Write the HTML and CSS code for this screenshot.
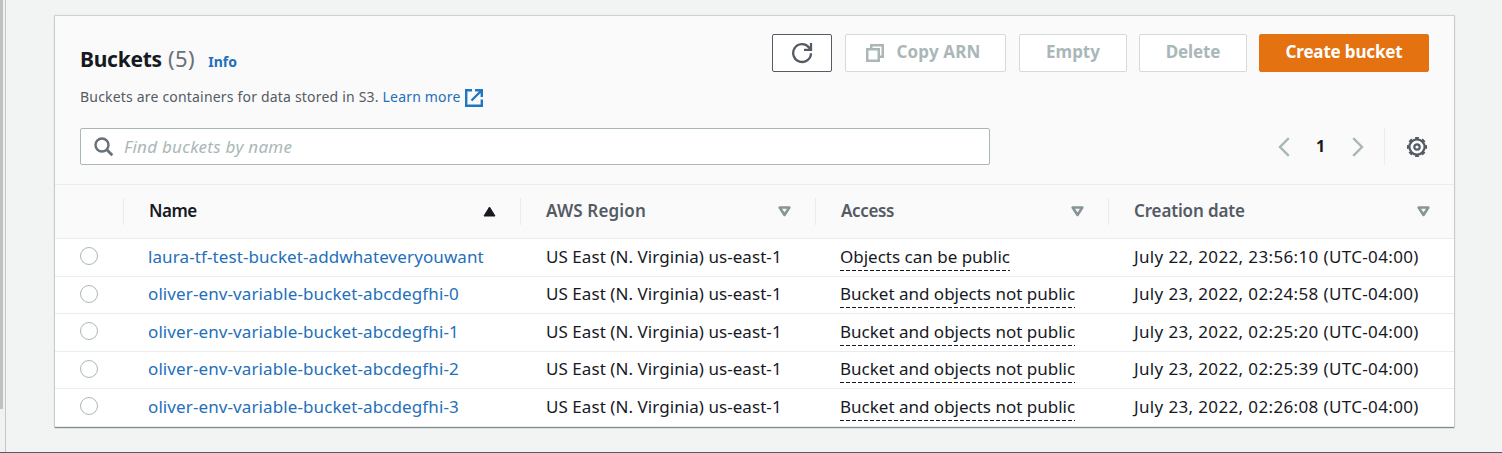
FILE: index.html
```html
<!DOCTYPE html>
<html lang="en">
<head>
<meta charset="utf-8">
<title>S3 Buckets</title>
<link rel="stylesheet" href="styles.css">
</head>
<body>
<div class="app">
  <div class="scrollbar"><div class="thumb"></div></div>
  <main class="content">
    <section class="panel">
      <header class="panel-head">
        <div class="title-row">
          <div class="heading">
            <h1><span class="title">Buckets</span><span class="count">(5)</span><a class="info">Info</a></h1>
            <p class="desc">Buckets are containers for data stored in S3. <a class="link">Learn more</a><svg class="ext" width="18" height="18" viewBox="0 0 18 18"><path d="M7 1.200H1.200v15.600h15.600V10.500M10 1.200h6.800V8M16.500 1.500L6.500 11.500" fill="none" stroke="currentColor" stroke-width="2.400"/></svg></p>
          </div>
          <div class="actions">
            <button class="btn refresh"><svg width="22" height="22" viewBox="0 0 22 22"><path d="M20 11.200A8.900 8.900 0 1 1 17.800 5.200L19.500 7.200M20 1v6.900h-7" fill="none" stroke="currentColor" stroke-width="2.300"/></svg></button>
            <button class="btn off copy"><svg width="18" height="18" viewBox="0 0 18 18"><path d="M1.250 5.250h11.500v11.500H1.250zM5.250 5V1.250h11.500v11.500H13" fill="none" stroke="currentColor" stroke-width="2.500"/></svg><span>Copy ARN</span></button>
            <button class="btn off empty">Empty</button>
            <button class="btn off delete">Delete</button>
            <button class="btn primary">Create bucket</button>
          </div>
        </div>
        <div class="filter-row">
          <div class="search">
            <svg width="20" height="20" viewBox="0 0 20 20"><path d="M12.600 12.600l5.700 5.700" fill="none" stroke="currentColor" stroke-width="2.800"/><circle cx="8" cy="8" r="6.500" fill="none" stroke="currentColor" stroke-width="2.400"/></svg>
            <span>Find buckets by name</span>
          </div>
          <div class="pager">
            <svg class="arrow" width="12" height="20" viewBox="0 0 12 20"><path d="M10.800 1.200L2 10l8.800 8.800" fill="none" stroke="currentColor" stroke-width="2.400"/></svg>
            <b class="page">1</b>
            <svg class="arrow" width="12" height="20" viewBox="0 0 12 20"><path d="M1.200 1.200L10 10l-8.800 8.800" fill="none" stroke="currentColor" stroke-width="2.400"/></svg>
            <span class="divider"></span>
            <svg class="gear" width="22" height="22" viewBox="0 0 22 22" fill="none" stroke="currentColor"><circle cx="11" cy="11" r="7.600" stroke-width="2.200"/><circle cx="11" cy="11" r="9" stroke-width="2.200" pathLength="80" stroke-dasharray="5.200 4.800" stroke-dashoffset="2.600"/><circle cx="11" cy="11" r="2.700" stroke-width="2.200"/></svg>
          </div>
        </div>
      </header>
      <div class="row thead">
        <div class="th"></div>
        <div class="th sorted"><span class="h-name">Name</span><svg class="sort" width="13" height="11" viewBox="0 0 13 11"><path d="M6.500 1L12 10H1z" fill="currentColor" stroke="currentColor" stroke-linejoin="round"/></svg></div>
        <div class="th"><span class="h-region">AWS Region</span><svg class="sort" width="13" height="11" viewBox="0 0 13 11"><path d="M1.700 1.500h9.600L6.500 9z" fill="none" stroke="currentColor" stroke-width="2.600" stroke-linejoin="round"/></svg></div>
        <div class="th"><span class="h-access">Access</span><svg class="sort" width="13" height="11" viewBox="0 0 13 11"><path d="M1.700 1.500h9.600L6.500 9z" fill="none" stroke="currentColor" stroke-width="2.600" stroke-linejoin="round"/></svg></div>
        <div class="th"><span class="h-date">Creation date</span><svg class="sort" width="13" height="11" viewBox="0 0 13 11"><path d="M1.700 1.500h9.600L6.500 9z" fill="none" stroke="currentColor" stroke-width="2.600" stroke-linejoin="round"/></svg></div>
      </div>
      <div class="row"><i class="radio"></i><a class="name">laura-tf-test-bucket-addwhateveryouwant</a><span class="region">US East (N. Virginia) us-east-1</span><span class="access"><u>Objects can be public</u></span><span class="date">July 22, 2022, 23:56:10 (UTC-04:00)</span></div>
      <div class="row short"><i class="radio"></i><a class="name">oliver-env-variable-bucket-abcdegfhi-0</a><span class="region">US East (N. Virginia) us-east-1</span><span class="access"><u>Bucket and objects not public</u></span><span class="date">July 23, 2022, 02:24:58 (UTC-04:00)</span></div>
      <div class="row"><i class="radio"></i><a class="name">oliver-env-variable-bucket-abcdegfhi-1</a><span class="region">US East (N. Virginia) us-east-1</span><span class="access"><u>Bucket and objects not public</u></span><span class="date">July 23, 2022, 02:25:20 (UTC-04:00)</span></div>
      <div class="row short"><i class="radio"></i><a class="name">oliver-env-variable-bucket-abcdegfhi-2</a><span class="region">US East (N. Virginia) us-east-1</span><span class="access"><u>Bucket and objects not public</u></span><span class="date">July 23, 2022, 02:25:39 (UTC-04:00)</span></div>
      <div class="row"><i class="radio"></i><a class="name">oliver-env-variable-bucket-abcdegfhi-3</a><span class="region">US East (N. Virginia) us-east-1</span><span class="access"><u>Bucket and objects not public</u></span><span class="date">July 23, 2022, 02:26:08 (UTC-04:00)</span></div>
    </section>
  </main>
</div>
</body>
</html>
```
FILE: styles.css
```css
* { box-sizing: border-box; }
body { margin: 0; background: #f2f3f3; color: #16191f; font: 17px/24px "Noto Sans", sans-serif; overflow: hidden; white-space: nowrap; }
svg { display: block; flex: none; }
.app { display: flex; height: 453px; border-bottom: 1px solid #545b64; }
.scrollbar { width: 6px; background: #f1f1f1; border-right: 1px solid #c4c8c8; }
.thumb { width: 3px; height: 409px; background: #c1c1c1; }
.content { flex: 1; padding: 16px 48px 0 49px; }
.panel { width: 1399px; height: 411px; background: #fff; box-shadow: 0 1px 1px 0 rgba(0,28,36,.4), 0 0 1px 1px rgba(0,28,36,.12), 0 -1px 0 0 #eaeded; }
.panel-head { height: 169px; padding: 18px 25px 0; background: #fafafa; border-bottom: 1px solid #eaeded; }
.title-row { display: flex; justify-content: space-between; height: 94px; }
.heading { padding-top: 10px; }
h1 { display: flex; align-items: baseline; margin: 0; line-height: 28px; font-size: 21px; }
.title { letter-spacing: -.25px; }
.count { margin-left: 6px; font-size: 22px; font-weight: 400; color: #687078; letter-spacing: .5px; }
.info { margin-left: 13px; font-size: 14px; color: #236fb9; }
.desc { display: flex; align-items: center; margin: 10px 0 0; font-size: 14px; line-height: 22px; letter-spacing: .19px; color: #545b64; white-space: pre; }
.link, .name { color: #236fb9; }
.ext { margin: 1px 0 0 4px; color: #1f76c2; }
.actions { display: flex; height: 38px; }
.btn { display: flex; align-items: center; justify-content: center; height: 38px; padding: 0 0 2px; font: 700 17px/22px "Noto Sans", sans-serif; border: 1px solid #545b64; border-radius: 2px; background: #fff; color: #545b64; }
.refresh { width: 60px; margin-right: 13px; padding: 0; }
.off { border-color: #d5dbdb; color: #aab7b8; }
.copy { width: 161px; margin-right: 13px; padding-right: 4px; gap: 12px; letter-spacing: .15px; }
.copy svg { margin-top: 2px; }
.empty { width: 108px; margin-right: 12px; }
.delete { width: 108px; margin-right: 12px; letter-spacing: -.1px; }
.primary { width: 170px; border-color: #e47211; background: #e47211; color: #fff; letter-spacing: -.17px; }
.filter-row { display: flex; justify-content: space-between; height: 37px; }
.search { display: flex; align-items: center; width: 910px; padding-left: 13px; background: #fff; border: 1px solid #aab7b8; border-radius: 2px; color: #687078; }
.search span { margin-left: 10px; font-style: italic; letter-spacing: .28px; color: #aab7b8; }
.pager { display: flex; align-items: center; color: #545b64; }
.arrow { color: #aab7b8; }
.page { width: 62px; padding: 0 1px 2px 0; text-align: center; font-size: 16px; color: #16191f; }
.divider { width: 1px; height: 37px; margin: 0 21px 0 20px; background: #eaeded; }
.gear { margin-right: 1px; }
.row { display: grid; grid-template-columns: 69px 397px 295px 293px 345px; align-items: center; height: 38px; border-bottom: 1px solid #eaeded; }
.short { height: 37px; }
.row > .name, .row > .region, .row > .access, .row > .date { padding-left: 24px; padding-bottom: 2px; }
.row > .region, .row > .date { padding-left: 25px; }
.thead { height: 54px; background: #fafafa; color: #545b64; font-weight: 600; }
.th { display: flex; align-items: center; justify-content: space-between; height: 27px; padding: 0 24px 0 25px; border-right: 1px solid #eaeded; }
.th:last-child { border-right: 0; }
.th span { padding-bottom: 2px; }
.sorted { color: #16191f; }
.sort { color: #879596; }
.sorted .sort { color: #16191f; }
.h-name { letter-spacing: -.5px; }
.h-region { letter-spacing: .15px; }
.h-access { letter-spacing: -.35px; }
.h-date { letter-spacing: -.15px; }
.radio { width: 18px; height: 18px; margin: 0 0 3px 25px; border: 1.500px solid #aab7b8; border-radius: 50%; background: #fff; }
.name { letter-spacing: .1px; }
.region { letter-spacing: .06px; }
.date { letter-spacing: .36px; }
.access u { display: inline-block; height: 28px; padding-top: 2px; text-decoration: none; background: repeating-linear-gradient(90deg, #16191f 0 4px, transparent 4px 6px) left bottom / 100% 1px no-repeat; }
```
